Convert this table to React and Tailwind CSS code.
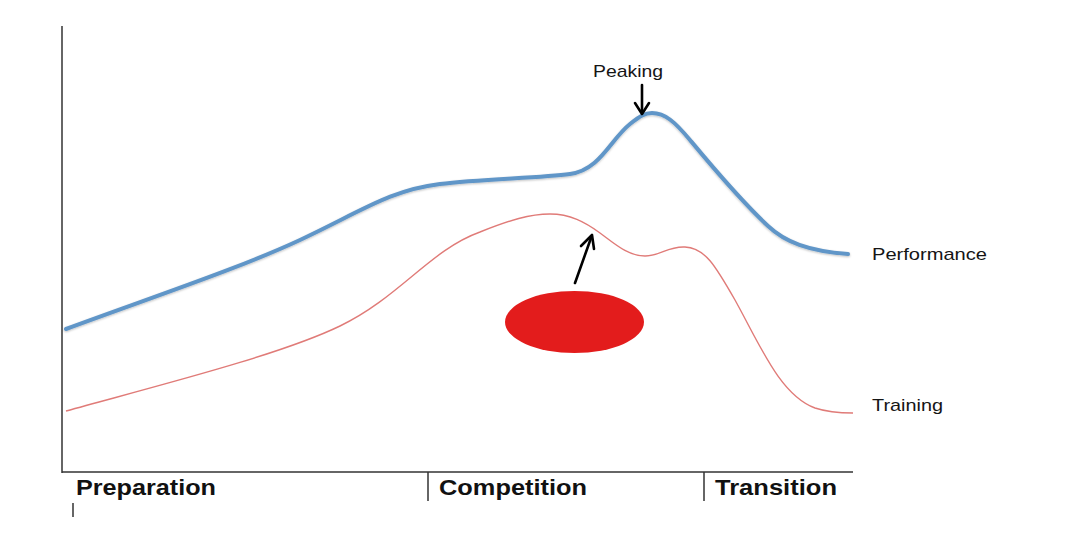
const bluePath =
  "M66,329 C150,298 240,268 300,240 C360,212 390,190 440,184 C480,179 540,178 570,174 " +
  "C600,170 610,140 630,124 C640,116 645,113 652,113 C665,113 675,122 690,140 " +
  "C700,152 738,198 768,226 C785,242 808,251 848,254";

const redPath =
  "M66,411 C160,385 280,355 340,326 C400,297 430,250 480,232 C510,220 530,214 550,214 " +
  "C570,214 585,222 600,233 C615,244 628,256 645,256 C660,256 668,246 685,247 " +
  "C705,248 715,265 735,300 C760,345 780,395 815,408 C830,413 845,413 853,413";

const phases = [
  { label: "Preparation", x: 76, w: 140 },
  { label: "Competition", x: 439, w: 148 },
  { label: "Transition", x: 715, w: 122 },
];

export default function App() {
  return (
    <div className="w-[1066px] h-[535px] bg-white overflow-hidden">
      <svg width="1066" height="535" viewBox="0 0 1066 535" className="block" style={{ fontFamily: '"Liberation Sans", Arial, sans-serif' }}>
        <defs>
          <filter id="soft" x="-5%" y="-20%" width="110%" height="140%">
            <feDropShadow dx="0" dy="1" stdDeviation="1" floodColor="#000" floodOpacity="0.25" />
          </filter>
        </defs>

        {/* axes */}
        <line x1="62" y1="26" x2="62" y2="473" stroke="#333" strokeWidth="1.5" />
        <line x1="62" y1="472" x2="853" y2="472" stroke="#333" strokeWidth="1.5" />
        <line x1="428" y1="472" x2="428" y2="501" stroke="#333" strokeWidth="1.5" />
        <line x1="704" y1="472" x2="704" y2="501" stroke="#333" strokeWidth="1.5" />
        <line x1="73" y1="503" x2="73" y2="517" stroke="#333" strokeWidth="1.5" />

        {/* curves */}
        <path d={redPath} fill="none" stroke="#e07b78" strokeWidth="1.4" />
        <path d={bluePath} fill="none" stroke="#6196c8" strokeWidth="4" strokeLinecap="round" filter="url(#soft)" />

        {/* red blob */}
        <ellipse cx="574.5" cy="322" rx="69.5" ry="31" fill="#e31c1c" />

        {/* arrows */}
        <g stroke="#000" strokeWidth="2.6" fill="none" strokeLinecap="round" strokeLinejoin="round">
          <line x1="642" y1="85" x2="642" y2="112" />
          <polyline points="635,103 642,114 649,103" />
          <line x1="575" y1="283" x2="591" y2="238" />
          <polyline points="581,246 592,235 594,249" />
        </g>

        {/* labels */}
        <g fill="#151515" fontSize="17">
          <text x="593" y="77" textLength="70" lengthAdjust="spacingAndGlyphs">Peaking</text>
          <text x="872" y="260" textLength="115" lengthAdjust="spacingAndGlyphs">Performance</text>
          <text x="872" y="411" textLength="71" lengthAdjust="spacingAndGlyphs">Training</text>
        </g>
        <g fill="#111" fontSize="22" fontWeight="700">
          {phases.map((p) => (
            <text key={p.label} x={p.x} y="495" textLength={p.w} lengthAdjust="spacingAndGlyphs">
              {p.label}
            </text>
          ))}
        </g>
      </svg>
    </div>
  );
}
